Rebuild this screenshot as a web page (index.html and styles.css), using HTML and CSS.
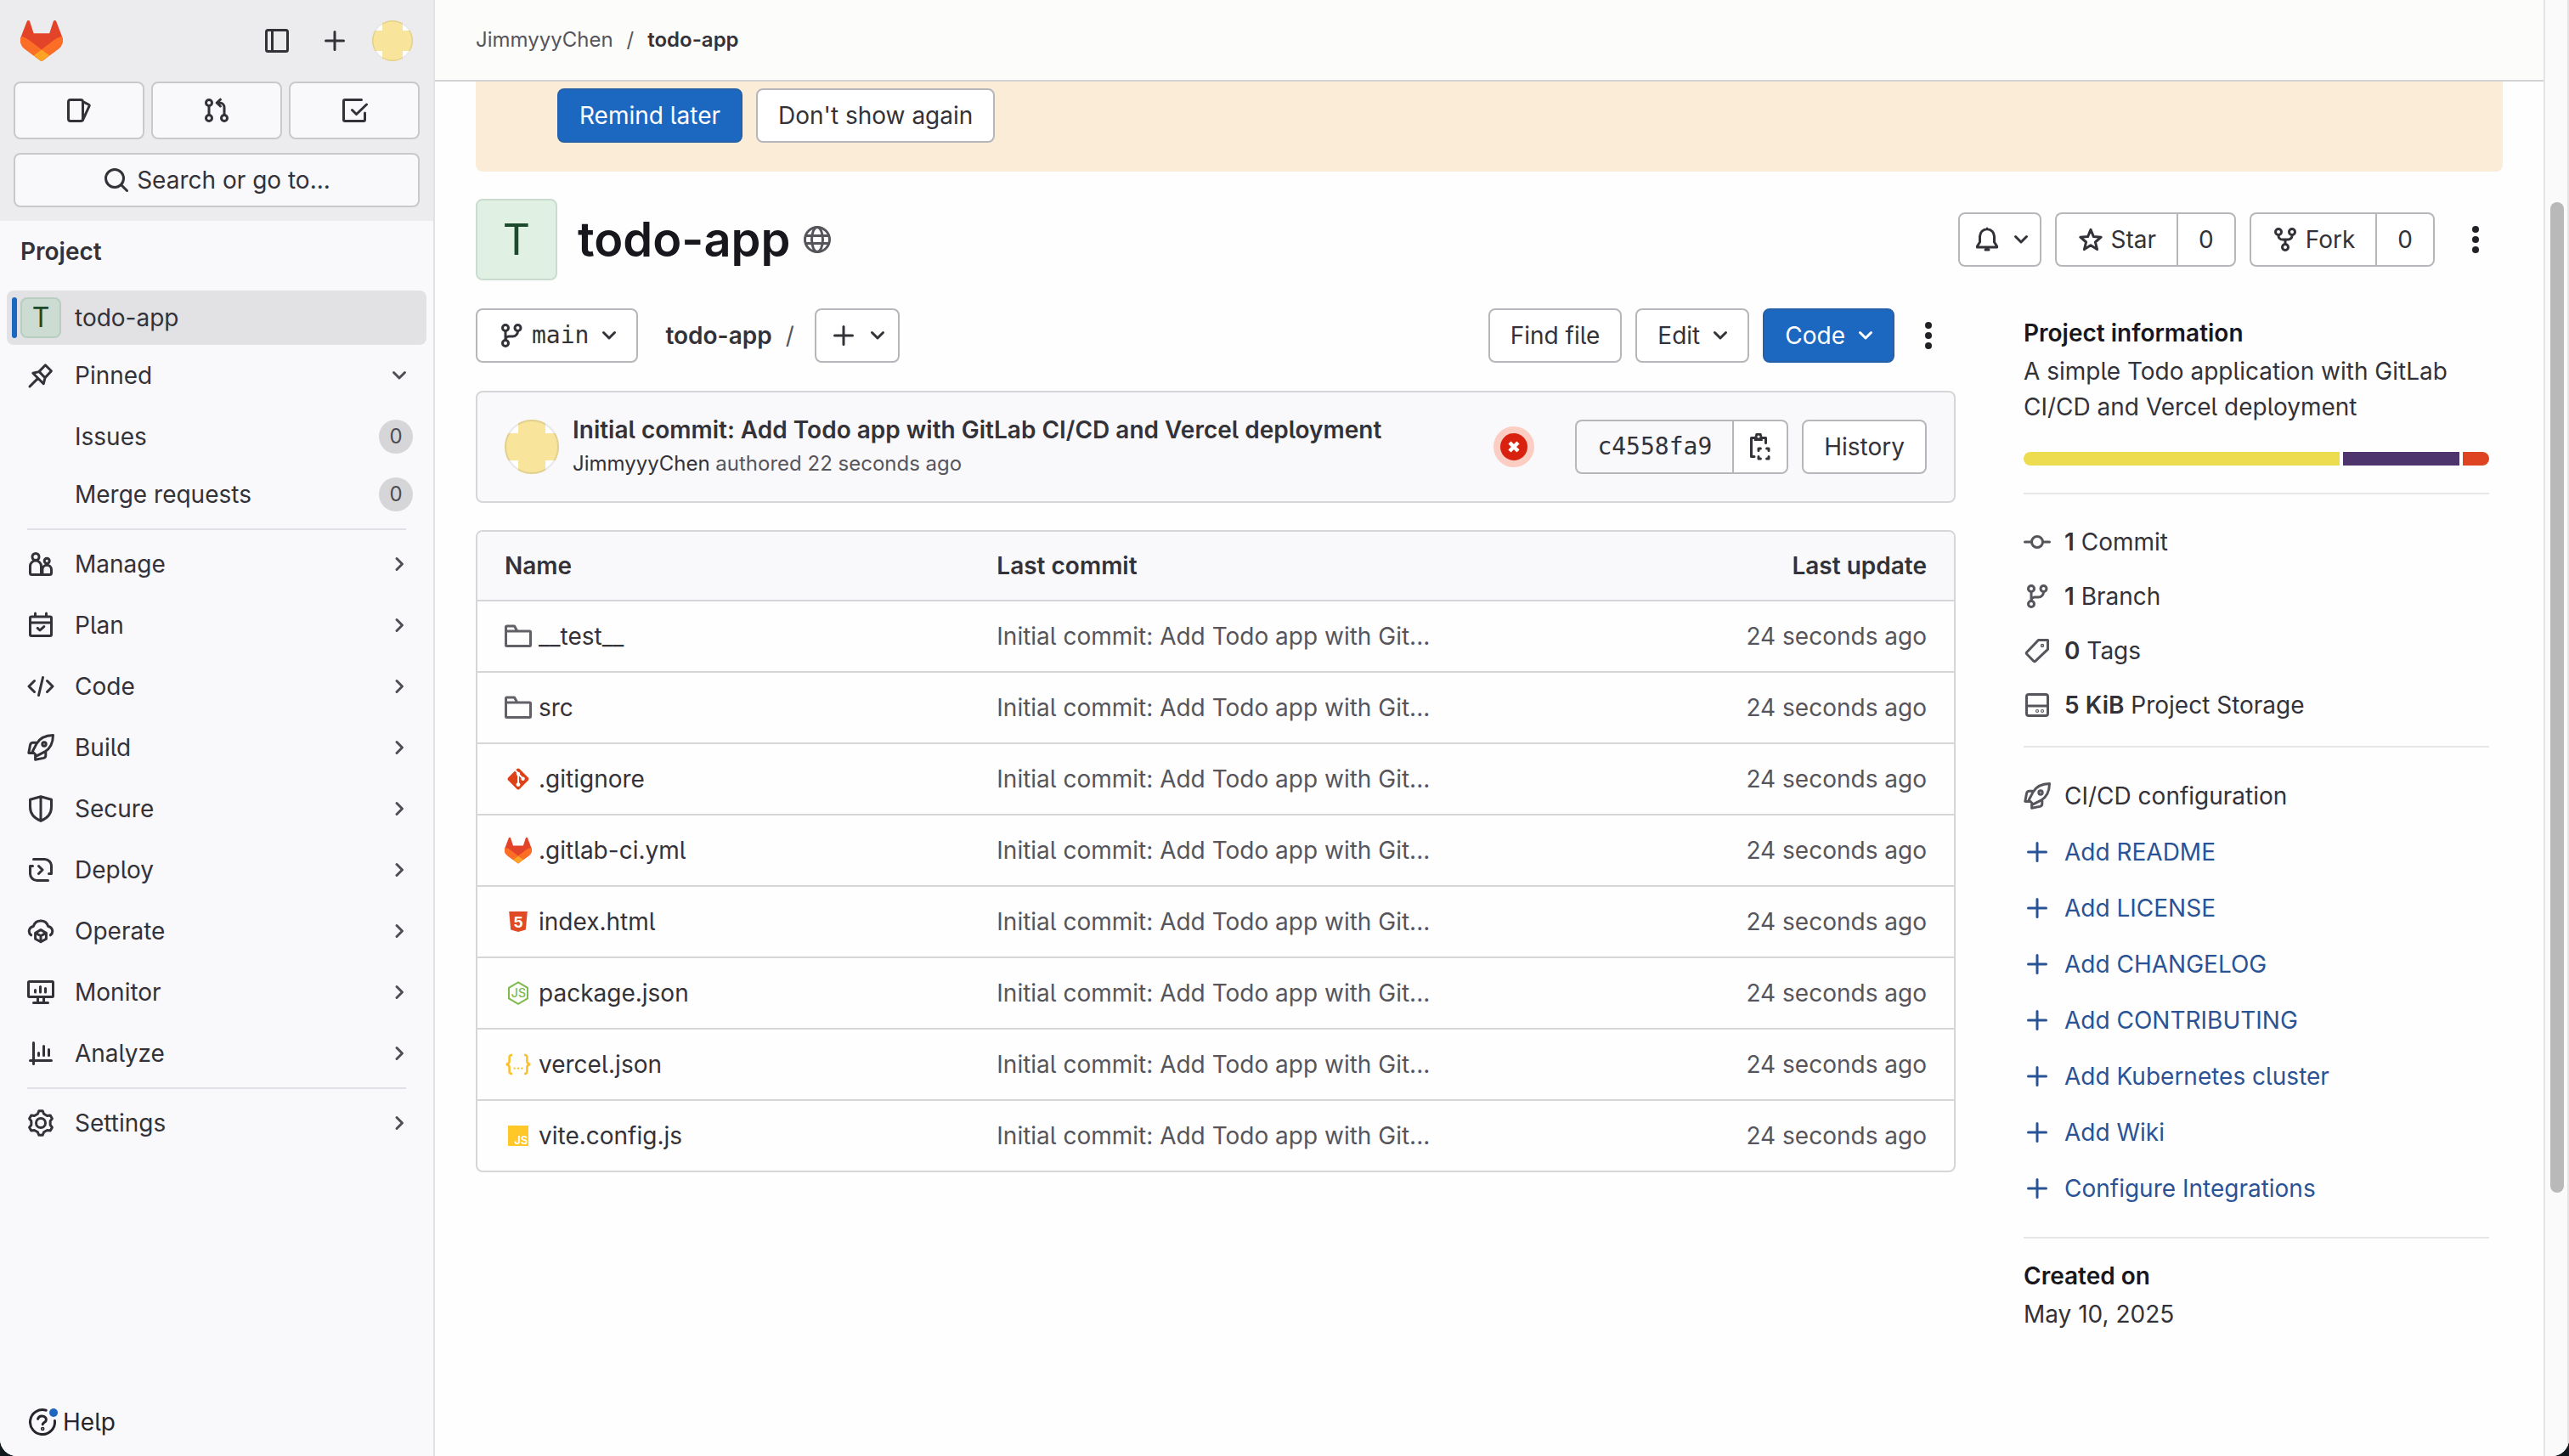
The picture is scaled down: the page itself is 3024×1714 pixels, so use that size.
FILE: index.html
```html
<!DOCTYPE html>
<html lang="en">
<head>
<meta charset="utf-8">
<title>JimmyyyChen / todo-app · GitLab</title>
<meta name="viewport" content="width=device-width, initial-scale=1">
<link rel="stylesheet" href="styles.css">
</head>
<body>
<svg class="sprite" aria-hidden="true">
  <symbol id="tanuki" viewBox="0 0 25 24">
    <path fill="#e24329" d="m24.507 9.5-.034-.09L21.082.562a.896.896 0 0 0-1.694.091l-2.29 7.01H7.825L5.535.653a.898.898 0 0 0-1.694-.09L.451 9.411.416 9.5a6.297 6.297 0 0 0 2.09 7.278l.012.01.03.022 5.16 3.867 2.56 1.935 1.554 1.176a1.051 1.051 0 0 0 1.268 0l1.555-1.176 2.56-1.935 5.197-3.89.014-.01A6.297 6.297 0 0 0 24.507 9.5Z"/>
    <path fill="#fc6d26" d="m24.507 9.5-.034-.09a11.44 11.44 0 0 0-4.56 2.051l-7.447 5.632 4.742 3.584 5.197-3.89.014-.01A6.297 6.297 0 0 0 24.507 9.5Z"/>
    <path fill="#fca326" d="m7.707 20.677 2.56 1.935 1.555 1.176a1.051 1.051 0 0 0 1.268 0l1.555-1.176 2.56-1.935-4.743-3.584-4.755 3.584Z"/>
    <path fill="#fc6d26" d="M5.01 11.461a11.43 11.43 0 0 0-4.56-2.05L.416 9.5a6.297 6.297 0 0 0 2.09 7.278l.012.01.03.022 5.16 3.867 4.745-3.584-7.444-5.632Z"/>
  </symbol>
  <symbol id="identicon" viewBox="0 0 48 48">
    <circle cx="24" cy="24" r="24" fill="#fff"/>
    <path fill="#f8e59b" d="M12 3.200A24 24 0 0 1 36 3.200V12h8.800A24 24 0 0 1 44.800 36H36v8.800A24 24 0 0 1 12 44.800V36H3.200A24 24 0 0 1 3.200 12H12z"/>
    <circle cx="24" cy="24" r="23.250" fill="none" stroke="#1f1e24" stroke-opacity=".1" stroke-width="1.500"/>
  </symbol>
  <symbol id="sidebar" viewBox="0 0 16 16"><rect x="1.750" y="1.750" width="12.500" height="12.500" rx="1"/><path d="M5.250 2v12"/></symbol>
  <symbol id="plus" viewBox="0 0 16 16"><path d="M8 2.750v10.500M2.750 8h10.500"/></symbol>
  <symbol id="issues" viewBox="0 0 16 16"><rect x="1.750" y="1.750" width="8.500" height="12.500" rx="1.250"/><path d="m11 3.200 2.600 1.300a.8.8 0 0 1 .4 1L10.300 13.600"/></symbol>
  <symbol id="merge" viewBox="0 0 16 16"><circle cx="3.500" cy="3.500" r="1.750"/><circle cx="3.500" cy="12.500" r="1.750"/><circle cx="12.500" cy="12.500" r="1.750"/><path d="M3.500 5.300v5.400M12.500 10.700V6.250a2.750 2.750 0 0 0-2.750-2.750H8.300M10.200 1.600 8.100 3.500l2.100 2"/></symbol>
  <symbol id="todo" viewBox="0 0 16 16"><path d="M12.250 1.750H2.500a.75.75 0 0 0-.75.75v11a.75.75 0 0 0 .75.75h11a.75.75 0 0 0 .75-.75v-4M6.750 7.750l2.500 2.500 6-5.750"/></symbol>
  <symbol id="search" viewBox="0 0 16 16"><circle cx="7" cy="7" r="5.250"/><path d="m11 11 3.250 3.250"/></symbol>
  <symbol id="pin" viewBox="0 0 16 16"><path d="m10.700 1.900 3.500 3.500-3.700 4-.9 3.500-6.200-6.300 3.500-.8zM7 5.700l3.500 3.700M6.200 9.800l-4.700 4.700"/></symbol>
  <symbol id="users" viewBox="0 0 16 16"><circle cx="5" cy="3.750" r="2"/><path d="M1.750 13.250V9.300a3.250 3.250 0 0 1 6.500 0v4.950h-5.500a1 1 0 0 1-1-1z"/><circle cx="11.600" cy="6.100" r="1.500"/><path d="M8.250 14.250h5a1 1 0 0 0 1-1v-2a2.650 2.650 0 0 0-5.300 0v3"/></symbol>
  <symbol id="calendar" viewBox="0 0 16 16"><rect x="1.750" y="3" width="12.500" height="11.250" rx=".75"/><path d="M4.750 1v1.700M11.250 1v1.700M2 6.500h12M6.100 9.700l1.400 1.300 2.400-2.200"/></symbol>
  <symbol id="code" viewBox="0 0 16 16"><path d="M4.250 4.750 1 8l3.250 3.250M11.750 4.750 15 8l-3.250 3.250M9.250 2.750l-2.500 10.500"/></symbol>
  <symbol id="rocket" viewBox="0 0 16 16"><path d="M15.250.75C10.500.8 7.200 2.700 5.500 5.800L3.100 10.400l2.500 2.500 4.600-2.300C13.300 8.800 15.200 5.500 15.250.75zM5.700 5.100H3.400c-.8 0-1.400.5-1.600 1.300L.9 11.200h2.300M10.900 10.300v2.300c0 .8-.5 1.400-1.300 1.600l-4.800.9v-2.300"/><circle cx="10" cy="6" r="1.100"/></symbol>
  <symbol id="shield" viewBox="0 0 16 16"><path d="m8 .9 6.250 1.700V7c0 4-2.600 6.700-6.250 8.200C4.350 13.700 1.750 11 1.750 7V2.600zM8 1v14"/></symbol>
  <symbol id="deploy" viewBox="0 0 16 16"><path d="M3.750 1.750h6.500a4 4 0 0 1 4 4v4.500h-1.500M12.250 14.250h-6.500a4 4 0 0 1-4-4v-4.500h1.500M6.750 5.750 9 8l-2.250 2.250"/></symbol>
  <symbol id="operate" viewBox="0 0 16 16"><path d="M2.300 10.400A2.900 2.900 0 0 1 3.700 5.200a4.500 4.500 0 0 1 8.600 0 2.900 2.900 0 0 1 1.400 5.200M8 7.300l3.200 1.800v3.500L8 14.400l-3.200-1.800V9.100zM5 9.200l3 1.700 3-1.700M8 10.900v3.300"/></symbol>
  <symbol id="monitor" viewBox="0 0 16 16"><rect x=".75" y="1.750" width="14.500" height="9" rx=".5"/><path d="M3.750 14.250h8.500M6.250 11v3M9.750 11v3M4.750 6.750V8M7.750 4.750V8M10.750 5.750V8"/></symbol>
  <symbol id="chart" viewBox="0 0 16 16"><path d="M3.750 1.750v12.500M1.750 12.250h12.500M6.750 7.750v1.500M9.750 3.750v5.500M12.750 5.750v3.500"/></symbol>
  <symbol id="gear" viewBox="0 0 16 16"><path d="M6.900.9h2.200l.7 1.700 1.980 1.140 1.820-.24 1.100 1.900-1.120 1.460v2.280l1.120 1.460-1.100 1.900-1.820-.24L9.800 13.400l-.7 1.700H6.900l-.7-1.700-1.980-1.140-1.820.24-1.100-1.900 1.120-1.460V6.860L1.300 5.400l1.100-1.900 1.820.24L6.200 2.600z"/><circle cx="8" cy="8" r="2.750"/></symbol>
  <symbol id="help" viewBox="0 0 16 16"><path d="M10.100 1.100A7.250 7.250 0 1 0 15.200 7.200M5.300 6.200a2.400 2.400 0 0 1 2.600-1.700c1.300.1 2.300 1 2.300 2.100 0 1.600-2.100 1.600-2.100 2.800"/><circle cx="8.100" cy="12" r=".4"/></symbol>
  <symbol id="down" viewBox="0 0 16 16"><path d="m4.750 6.250 3.250 3.250 3.250-3.250"/></symbol>
  <symbol id="right" viewBox="0 0 16 16"><path d="m6.500 4.750 3.250 3.250-3.250 3.250"/></symbol>
  <symbol id="globe" viewBox="0 0 16 16"><circle cx="8" cy="8" r="7.250"/><ellipse cx="8" cy="8" rx="3.250" ry="7.250"/><path d="M1.300 5.750h13.400M1.300 10.250h13.400"/></symbol>
  <symbol id="bell" viewBox="0 0 16 16"><path d="M8 1.900A4.250 4.250 0 0 0 3.750 6.100v3.400L2.200 12v.5h11.600V12l-1.550-2.500V6.100A4.250 4.250 0 0 0 8 1.900zM8 1.500v.4M7 14h2"/></symbol>
  <symbol id="star" viewBox="0 0 16 16"><path d="m8 2.200 1.700 4.100 4.400.3-3.400 2.900 1.100 4.300L8 11.400l-3.800 2.400 1.100-4.300L1.900 6.600l4.400-.3z"/></symbol>
  <symbol id="fork" viewBox="0 0 16 16"><circle cx="4" cy="3.500" r="1.750"/><circle cx="12" cy="3.500" r="1.750"/><circle cx="8" cy="12.500" r="1.750"/><path d="M4 5.300v.4A2.300 2.300 0 0 0 6.300 8h3.400A2.300 2.300 0 0 0 12 5.700v-.4M8 8v2.700"/></symbol>
  <symbol id="branch" viewBox="0 0 16 16"><circle cx="4.500" cy="3.500" r="1.750"/><circle cx="11.750" cy="3.500" r="1.750"/><circle cx="4.500" cy="12.500" r="1.750"/><path d="M4.500 5.300v5.400M11.750 5.300v.2a3 3 0 0 1-3 3H6.500a2 2 0 0 0-2 2"/></symbol>
  <symbol id="dots" viewBox="0 0 16 16"><g fill="currentColor" stroke="none"><circle cx="8" cy="2" r="2"/><circle cx="8" cy="8" r="2"/><circle cx="8" cy="14" r="2"/></g></symbol>
  <symbol id="clipboard" viewBox="0 0 16 16"><path d="M4.300 2.750H2.750v11H4.500M9 2.750h2.250v3"/><path fill="currentColor" stroke="none" fill-rule="evenodd" d="M5 1.500a2 2 0 0 1 4 0l.4 1v2H4.400v-2zM7 1.200a.8.8 0 1 0 0 1.600.8.8 0 0 0 0-1.600z"/><path d="M7 10.200V9h1.200M11.800 9H13v1.200M13 13.800V15h-1.200M8.200 15H7v-1.200"/></symbol>
  <symbol id="commit" viewBox="0 0 16 16"><circle cx="8" cy="8" r="3.250"/><path d="M.75 8h4M11.250 8h4"/></symbol>
  <symbol id="tag" viewBox="0 0 16 16"><path d="M8.700 1.750h5.550V7.200L7 14.100a.8.8 0 0 1-1.100 0L1.900 10a.8.8 0 0 1 0-1.100z"/><circle cx="11" cy="5" r=".35"/></symbol>
  <symbol id="disk" viewBox="0 0 16 16"><rect x="1.750" y="1.750" width="12.500" height="12.500" rx="1.250"/><path d="M2 8.500h12"/><circle cx="8" cy="11.500" r=".3"/><circle cx="11" cy="11.500" r=".3"/></symbol>
  <symbol id="folder" viewBox="0 0 16 16"><path d="M.75 2.500a.5.5 0 0 1 .5-.5h4.500l1.700 3h7.300a.5.5 0 0 1 .5.5v7.750a.5.5 0 0 1-.5.5H1.250a.5.5 0 0 1-.5-.5zM.75 5H7.500"/></symbol>
  <symbol id="f-git" viewBox="0 0 16 16"><rect x="3.300" y="3.300" width="9.400" height="9.400" rx="1" transform="rotate(45 8 8)" fill="#de4017"/><path d="M6.200 2.800 8 4.700v6.500M8 5l2.800 2.800" stroke="#fff" fill="none"/><g fill="#fff"><circle cx="8" cy="5" r="1.100"/><circle cx="8" cy="11.300" r="1.200"/><circle cx="10.800" cy="7.900" r="1.100"/></g></symbol>
  <symbol id="f-html" viewBox="0 0 16 16"><path fill="#e04a25" d="M2.600 2h10.800l-1 10.700L8 14l-4.400-1.300z"/><text x="8" y="11.300" text-anchor="middle" font-size="9" font-weight="700" fill="#fff">5</text></symbol>
  <symbol id="f-node" viewBox="0 0 16 16"><path fill="none" stroke="#7fba4c" d="m8 1.700 5.500 3.200v6.300L8 14.400l-5.500-3.200V4.900z"/><text x="8.200" y="10.700" text-anchor="middle" font-size="7" font-weight="500" fill="#7fba4c">JS</text></symbol>
  <symbol id="f-json" viewBox="0 0 16 16"><path fill="none" stroke="#fbc02d" stroke-width="1.300" d="M4.500 2.500H4A1.200 1.200 0 0 0 2.800 3.700v2.600C2.800 7.300 2 7.800.9 8c1.100.2 1.900.7 1.900 1.700v2.600A1.200 1.200 0 0 0 4 13.500h.5M11.500 2.500h.5a1.200 1.200 0 0 1 1.200 1.200v2.600c0 1 .8 1.500 1.900 1.700-1.100.2-1.900.7-1.900 1.700v2.600a1.200 1.200 0 0 1-1.200 1.200h-.5"/><g fill="#fbc02d"><circle cx="5.800" cy="10.300" r=".6"/><circle cx="8" cy="10.300" r=".6"/><circle cx="10.200" cy="10.300" r=".6"/></g></symbol>
  <symbol id="f-js" viewBox="0 0 16 16"><path fill="#ffc727" d="M2 2h12v12H2z"/><text x="9.600" y="12.800" text-anchor="middle" font-size="6.500" font-weight="600" fill="#fff">JS</text></symbol>
</svg>

<div class="app">
  <aside class="sidebar">
    <div class="sidebar-top">
      <div class="brand-row">
        <a class="brand" href="#" aria-label="Homepage"><svg class="logo"><use href="#tanuki"/></svg></a>
        <button class="plain" aria-label="Hide sidebar"><svg class="icon"><use href="#sidebar"/></svg></button>
        <button class="plain" aria-label="Create new"><svg class="icon"><use href="#plus"/></svg></button>
        <button class="plain" aria-label="User menu"><svg class="avatar-sm"><use href="#identicon"/></svg></button>
      </div>
      <div class="counters">
        <a href="#" aria-label="Assigned issues"><svg class="icon"><use href="#issues"/></svg></a>
        <a href="#" aria-label="Merge requests"><svg class="icon"><use href="#merge"/></svg></a>
        <a href="#" aria-label="To-Do List"><svg class="icon"><use href="#todo"/></svg></a>
      </div>
      <button class="search"><svg class="icon"><use href="#search"/></svg>Search or go to...</button>
    </div>
    <nav class="nav" aria-label="Project">
      <h2 class="nav-title">Project</h2>
      <a class="nav-item current" href="#"><span class="tile tile-sm">T</span><span class="label">todo-app</span></a>
      <button class="nav-item pinned"><svg class="icon"><use href="#pin"/></svg><span class="label">Pinned</span><svg class="icon chev"><use href="#down"/></svg></button>
      <div class="nav-sub">
        <a class="nav-item" href="#"><span class="label">Issues</span><span class="badge">0</span></a>
        <a class="nav-item" href="#"><span class="label">Merge requests</span><span class="badge">0</span></a>
      </div>
      <hr>
      <div class="nav-group">
        <button class="nav-item"><svg class="icon"><use href="#users"/></svg><span class="label">Manage</span><svg class="icon chev"><use href="#right"/></svg></button>
        <button class="nav-item"><svg class="icon"><use href="#calendar"/></svg><span class="label">Plan</span><svg class="icon chev"><use href="#right"/></svg></button>
        <button class="nav-item"><svg class="icon"><use href="#code"/></svg><span class="label">Code</span><svg class="icon chev"><use href="#right"/></svg></button>
        <button class="nav-item"><svg class="icon"><use href="#rocket"/></svg><span class="label">Build</span><svg class="icon chev"><use href="#right"/></svg></button>
        <button class="nav-item"><svg class="icon"><use href="#shield"/></svg><span class="label">Secure</span><svg class="icon chev"><use href="#right"/></svg></button>
        <button class="nav-item"><svg class="icon"><use href="#deploy"/></svg><span class="label">Deploy</span><svg class="icon chev"><use href="#right"/></svg></button>
        <button class="nav-item"><svg class="icon"><use href="#operate"/></svg><span class="label">Operate</span><svg class="icon chev"><use href="#right"/></svg></button>
        <button class="nav-item"><svg class="icon"><use href="#monitor"/></svg><span class="label">Monitor</span><svg class="icon chev"><use href="#right"/></svg></button>
        <button class="nav-item"><svg class="icon"><use href="#chart"/></svg><span class="label">Analyze</span><svg class="icon chev"><use href="#right"/></svg></button>
      </div>
      <hr>
      <button class="nav-item"><svg class="icon"><use href="#gear"/></svg><span class="label">Settings</span><svg class="icon chev"><use href="#right"/></svg></button>
    </nav>
    <button class="help"><span class="help-icon"><svg class="icon"><use href="#help"/></svg><span class="help-dot"></span></span>Help</button>
  </aside>

  <div class="page">
    <header class="topbar">
      <nav class="crumbs" aria-label="Breadcrumb"><a href="#">JimmyyyChen</a><span>/</span><a class="here" href="#">todo-app</a></nav>
    </header>
    <main class="content">
      <div class="alert">
        <button class="btn primary">Remind later</button>
        <button class="btn">Don't show again</button>
      </div>

      <div class="title-row">
        <span class="tile tile-lg">T</span>
        <h1>todo-app</h1>
        <svg class="icon muted"><use href="#globe"/></svg>
        <div class="title-actions">
          <button class="btn icon-menu bell" aria-label="Notifications"><svg class="icon"><use href="#bell"/></svg><svg class="icon"><use href="#down"/></svg></button>
          <div class="btn-group"><button class="btn"><svg class="icon"><use href="#star"/></svg>Star</button><a class="btn" href="#">0</a></div>
          <div class="btn-group"><button class="btn"><svg class="icon"><use href="#fork"/></svg>Fork</button><a class="btn" href="#">0</a></div>
          <button class="more" aria-label="More actions"><svg class="icon"><use href="#dots"/></svg></button>
        </div>
      </div>

      <div class="columns">
        <section class="tree">
          <div class="toolbar">
            <button class="btn menu mono"><svg class="icon"><use href="#branch"/></svg>main<svg class="icon"><use href="#down"/></svg></button>
            <div class="path"><a href="#">todo-app</a><span>/</span></div>
            <button class="btn icon-menu" aria-label="Add to tree"><svg class="icon"><use href="#plus"/></svg><svg class="icon"><use href="#down"/></svg></button>
            <div class="toolbar-right">
              <button class="btn">Find file</button>
              <button class="btn menu">Edit<svg class="icon"><use href="#down"/></svg></button>
              <button class="btn menu primary">Code<svg class="icon"><use href="#down"/></svg></button>
              <button class="more narrow" aria-label="More actions"><svg class="icon"><use href="#dots"/></svg></button>
            </div>
          </div>

          <div class="commit">
            <svg class="avatar-md"><use href="#identicon"/></svg>
            <div class="commit-text">
              <a class="commit-title" href="#">Initial commit: Add Todo app with GitLab CI/CD and Vercel deployment</a>
              <div class="commit-meta"><a href="#">JimmyyyChen</a> authored 22 seconds ago</div>
            </div>
            <a class="status" href="#" aria-label="Pipeline: failed"><svg viewBox="0 0 48 48"><circle cx="24" cy="24" r="24" fill="#fbcdc3"/><circle cx="24" cy="24" r="16" fill="#d8210f"/><path d="m19 19 10 10M29 19 19 29" stroke="#fff" stroke-width="4.500"/></svg></a>
            <div class="commit-actions">
              <div class="btn-group"><span class="btn sha mono">c4558fa9</span><button class="btn copy" aria-label="Copy commit SHA"><svg class="icon"><use href="#clipboard"/></svg></button></div>
              <a class="btn" href="#">History</a>
            </div>
          </div>

          <div class="files">
            <table>
              <thead><tr><th>Name</th><th>Last commit</th><th class="date">Last update</th></tr></thead>
              <tbody>
                <tr><td><a href="#"><svg class="icon folder"><use href="#folder"/></svg>__test__</a></td><td>Initial commit: Add Todo app with Git...</td><td class="date">24 seconds ago</td></tr>
                <tr><td><a href="#"><svg class="icon folder"><use href="#folder"/></svg>src</a></td><td>Initial commit: Add Todo app with Git...</td><td class="date">24 seconds ago</td></tr>
                <tr><td><a href="#"><svg class="file"><use href="#f-git"/></svg>.gitignore</a></td><td>Initial commit: Add Todo app with Git...</td><td class="date">24 seconds ago</td></tr>
                <tr><td><a href="#"><svg class="file"><use href="#tanuki"/></svg>.gitlab-ci.yml</a></td><td>Initial commit: Add Todo app with Git...</td><td class="date">24 seconds ago</td></tr>
                <tr><td><a href="#"><svg class="file"><use href="#f-html"/></svg>index.html</a></td><td>Initial commit: Add Todo app with Git...</td><td class="date">24 seconds ago</td></tr>
                <tr><td><a href="#"><svg class="file"><use href="#f-node"/></svg>package.json</a></td><td>Initial commit: Add Todo app with Git...</td><td class="date">24 seconds ago</td></tr>
                <tr><td><a href="#"><svg class="file"><use href="#f-json"/></svg>vercel.json</a></td><td>Initial commit: Add Todo app with Git...</td><td class="date">24 seconds ago</td></tr>
                <tr><td><a href="#"><svg class="file"><use href="#f-js"/></svg>vite.config.js</a></td><td>Initial commit: Add Todo app with Git...</td><td class="date">24 seconds ago</td></tr>
              </tbody>
            </table>
          </div>
        </section>

        <aside class="info">
          <h2>Project information</h2>
          <p>A simple Todo application with GitLab CI/CD and Vercel deployment</p>
          <div class="langs">
            <span class="lang-js" style="flex-grow: 68.900"></span>
            <span class="lang-css" style="flex-grow: 25.400"></span>
            <span class="lang-html" style="flex-grow: 5.700"></span>
          </div>
          <ul class="stats">
            <li><a href="#"><svg class="icon"><use href="#commit"/></svg><span><strong>1</strong> Commit</span></a></li>
            <li><a href="#"><svg class="icon"><use href="#branch"/></svg><span><strong>1</strong> Branch</span></a></li>
            <li><a href="#"><svg class="icon"><use href="#tag"/></svg><span><strong>0</strong> Tags</span></a></li>
            <li><a href="#"><svg class="icon"><use href="#disk"/></svg><span><strong>5 KiB</strong> Project Storage</span></a></li>
          </ul>
          <ul class="links">
            <li><a class="dark" href="#"><svg class="icon"><use href="#rocket"/></svg>CI/CD configuration</a></li>
            <li><a href="#"><svg class="icon"><use href="#plus"/></svg>Add README</a></li>
            <li><a href="#"><svg class="icon"><use href="#plus"/></svg>Add LICENSE</a></li>
            <li><a href="#"><svg class="icon"><use href="#plus"/></svg>Add CHANGELOG</a></li>
            <li><a href="#"><svg class="icon"><use href="#plus"/></svg>Add CONTRIBUTING</a></li>
            <li><a href="#"><svg class="icon"><use href="#plus"/></svg>Add Kubernetes cluster</a></li>
            <li><a href="#"><svg class="icon"><use href="#plus"/></svg>Add Wiki</a></li>
            <li><a href="#"><svg class="icon"><use href="#plus"/></svg>Configure Integrations</a></li>
          </ul>
          <div class="created">
            <h2>Created on</h2>
            <p>May 10, 2025</p>
          </div>
        </aside>
      </div>
    </main>
  </div>

  <div class="scroll-track" aria-hidden="true"><span class="scroll-thumb"></span></div>
</div>
</body>
</html>
```
FILE: styles.css
```css
* { box-sizing: border-box; }

html { background: #101a1e; }

body {
  margin: 0;
  color: #333238;
  font-family: Inter, "Noto Sans", sans-serif;
  font-size: 28px;
  line-height: 40px;
  font-feature-settings: "cv05";
}

a { color: inherit; text-decoration: none; }
button { font: inherit; font-feature-settings: inherit; color: inherit; cursor: pointer; }
h1, h2, p, ul { margin: 0; padding: 0; }
ul { list-style: none; }
hr { height: 2px; margin: 8px 24px; border: 0; background: #e1e0e7; }

.sprite { display: none; }

.icon {
  flex: none;
  width: 32px;
  height: 32px;
  fill: none;
  stroke: currentColor;
  stroke-width: 1.500;
  stroke-linecap: round;
  stroke-linejoin: round;
}
.muted { color: #56555b; }

.app {
  display: grid;
  grid-template-columns: 512px minmax(0, 1fr) 30px;
  min-height: 100vh;
  overflow: hidden;
  border-radius: 0 0 20px 20px;
  background: #fefefe;
}

/* Sidebar */
.sidebar {
  display: flex;
  flex-direction: column;
  border-right: 2px solid #e2e2e5;
  background: #f9f8fb;
}
.sidebar-top {
  display: flex;
  flex-direction: column;
  gap: 16px;
  padding: 24px 16px 16px;
  background: #ececef;
}
.brand-row { display: flex; align-items: center; padding: 0 8px 8px; }
.brand { display: flex; margin-right: auto; }
.logo { width: 50px; height: 48px; }
.plain { display: flex; padding: 0; border: 0; background: none; }
.plain + .plain { margin-left: 36px; }
.plain:last-child { margin-left: 28px; }
.avatar-sm { width: 48px; height: 48px; }
.counters { display: grid; grid-template-columns: repeat(3, 1fr); gap: 8px; }
.counters a, .search {
  display: flex;
  align-items: center;
  justify-content: center;
  gap: 8px;
  border: 2px solid #c9c9cc;
  border-radius: 8px;
  background: #f9f8fb;
}
.counters a { height: 68px; }
.search { height: 64px; padding: 0; }

.nav { padding: 16px 8px; }
.nav-title { padding: 0 16px; margin-bottom: 26px; font-size: 28px; font-weight: 600; }
.nav-item {
  display: flex;
  align-items: center;
  gap: 24px;
  width: 100%;
  height: 64px;
  padding: 0 16px 0 24px;
  border: 0;
  border-radius: 8px;
  background: none;
  text-align: left;
}
.nav-item.current { gap: 16px; padding-left: 6px; background: #e2e2e4; }
.nav-item.current::before {
  content: "";
  width: 6px;
  height: 48px;
  margin-right: -12px;
  border-radius: 3px;
  background: #1c68c1;
}
.pinned { margin: 4px 0 8px; }
.label { flex: 1; }
.chev { color: #4f4e54; }
.nav-sub { display: flex; flex-direction: column; gap: 4px; }
.nav-sub .nav-item { padding-left: 80px; }
.nav-group { display: flex; flex-direction: column; gap: 8px; }
.badge {
  width: 40px;
  border-radius: 20px;
  background: #d6d6d8;
  color: #4c4b51;
  font-size: 24px;
  text-align: center;
}
.help {
  display: flex;
  align-items: center;
  gap: 8px;
  align-self: flex-start;
  margin: auto 16px 8px;
  height: 64px;
  padding: 0 18px;
  border: 0;
  background: none;
  color: #26252b;
}
.help-icon { display: flex; position: relative; }
.help-dot {
  position: absolute;
  top: 0;
  right: -2px;
  width: 10px;
  height: 10px;
  border-radius: 50%;
  background: #1c68c1;
}

.tile {
  display: grid;
  place-items: center;
  flex: none;
  border: 2px solid #c9dccf;
  border-radius: 8px;
  background: #e0f1e4;
  color: #1c4a2c;
}
.tile-sm { width: 48px; height: 48px; border-color: #b9cdc1; background: #cddcd2; font-size: 32px; }
.tile-lg { width: 96px; height: 96px; font-size: 50px; }

/* Page */
.topbar {
  display: flex;
  align-items: center;
  height: 96px;
  padding: 0 48px;
  border-bottom: 2px solid #d3d3d5;
  background: #fcfcfa;
}
.crumbs { display: flex; gap: 16px; color: #56555b; font-size: 24px; }
.crumbs .here { color: #333238; font-weight: 600; }
.content { padding: 0 48px 64px; }
.alert {
  display: flex;
  gap: 16px;
  padding: 8px 96px 34px;
  border-radius: 0 0 8px 8px;
  background: #fbecd8;
}

.btn {
  display: flex;
  align-items: center;
  gap: 8px;
  height: 64px;
  padding: 0 24px;
  border: 2px solid #b7b7bb;
  border-radius: 8px;
  background: #fff;
  white-space: nowrap;
}
.primary { border-color: #2560a9; background: #1c68c1; color: #fff; }
.menu { padding-right: 16px; }
.icon-menu { padding: 0 8px 0 16px; }
.bell { padding-right: 6px; }
.mono { font-family: "DejaVu Sans Mono", "Liberation Mono", monospace; }
.btn-group { display: flex; }
.btn-group .btn:first-child { border-radius: 8px 0 0 8px; border-right: 0; }
.btn-group .btn:last-child { border-radius: 0 8px 8px 0; }
.more {
  display: grid;
  place-items: center;
  width: 64px;
  height: 64px;
  padding: 0;
  border: 0;
  background: none;
  color: #222126;
}
.narrow { width: 48px; }

.title-row { display: flex; align-items: center; gap: 16px; margin: 32px 0; }
h1 {
  margin-left: 8px;
  color: #18171d;
  font-size: 56px;
  line-height: 72px;
  font-weight: 600;
}
.title-actions { display: flex; gap: 16px; margin-left: auto; }

.columns {
  display: grid;
  grid-template-columns: minmax(0, 1fr) 548px;
  gap: 80px;
  padding-right: 16px;
}
.tree { display: flex; flex-direction: column; gap: 32px; }
.toolbar { display: flex; align-items: center; height: 66px; }
.path { display: flex; gap: 16px; margin: 0 24px 0 32px; font-weight: 600; }
.path span { color: #56555b; font-weight: 400; }
.toolbar-right { display: flex; gap: 16px; margin-left: auto; padding-right: 8px; }

.commit, .files { border: 2px solid #d6d6d9; border-radius: 8px; }
.commit {
  display: flex;
  align-items: center;
  gap: 16px;
  height: 132px;
  padding: 0 32px;
  background: #f9f8fb;
}
.avatar-md { width: 64px; height: 64px; }
.commit-text { flex: 1; }
.commit-title { font-weight: 600; }
.commit-meta { color: #56555b; font-size: 24px; }
.commit-meta a { color: #333238; }
.status { display: flex; margin-right: 32px; }
.status svg { width: 48px; height: 48px; }
.commit-actions { display: flex; gap: 16px; }
.sha { background: #f9f8fb; }
.copy { padding: 0 15px; }

.files { overflow: hidden; }
table { width: 100%; table-layout: fixed; border-collapse: separate; border-spacing: 0; }
th, td { height: 84px; padding: 0 32px; border-bottom: 2px solid #d6d6d9; text-align: left; white-space: nowrap; }
th { height: 82px; background: #f9f8fb; font-weight: 600; }
td { color: #56555b; }
td a { display: flex; align-items: center; gap: 8px; color: #333238; }
tr:last-child td { height: 82px; border-bottom: 0; }
thead tr:last-child th { border-bottom: 2px solid #d6d6d9; }
.date { text-align: right; }
.folder { color: #626168; }
.file { flex: none; width: 32px; height: 32px; }

/* Project information */
.info { padding-top: 10px; }
.info h2 { margin-bottom: 4px; color: #18171d; font-size: 28px; font-weight: 600; }
.info p { line-height: 42px; }
.langs { display: flex; gap: 4px; height: 16px; margin: 32px 0; overflow: hidden; border-radius: 8px; }
.lang-js { background: #eedc50; }
.lang-css { background: #4d346d; }
.lang-html { background: #de4322; }
.stats, .links, .created { border-top: 2px solid #e7e7e9; }
.stats { padding: 24px 0 16px; }
.links { padding: 24px 0; }
.created { padding-top: 24px; }
.info a { display: flex; align-items: center; gap: 16px; height: 66px; }
.info .stats a { height: 64px; }
.stats .icon, .dark .icon { color: #56555b; }
.stats strong { font-weight: 600; }
.links a { color: #2a5395; }
.links .dark { color: #333238; }

/* Scrollbar */
.scroll-track {
  display: grid;
  grid-template-rows: 238fr 1166fr 310fr;
  padding: 0 4px 0 6px;
  border: solid #e4e4e5;
  border-width: 0 2px;
  background: #fafafa;
}
.scroll-thumb { grid-row: 2; border-radius: 8px; background: #b9b9b9; }
```
